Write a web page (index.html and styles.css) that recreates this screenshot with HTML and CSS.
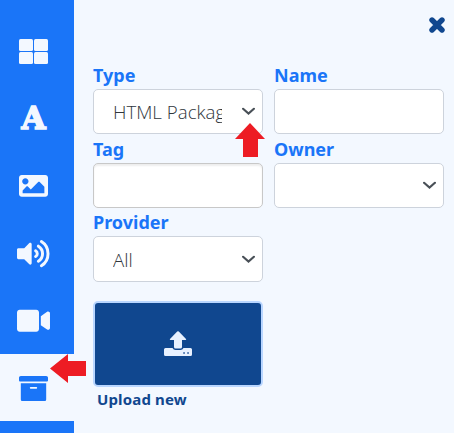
FILE: index.html
```html
<!DOCTYPE html>
<html lang="en">
<head>
<meta charset="utf-8">
<title>Media library</title>
<link rel="stylesheet" href="styles.css">
</head>
<body>
<div class="app">
  <nav class="sidebar">
    <a class="item"><svg class="icon" viewBox="0 0 29 25"><rect width="14" height="12" rx="1.5"/><rect x="15" width="14" height="12" rx="1.5"/><rect y="13" width="14" height="12" rx="1.5"/><rect x="15" y="13" width="14" height="12" rx="1.5"/></svg></a>
    <a class="item letter"><span>A</span></a>
    <a class="item"><svg class="icon" viewBox="0 64 512 384"><path d="M464 448H48c-26.500 0-48-21.500-48-48V112c0-26.500 21.500-48 48-48h416c26.500 0 48 21.500 48 48v288c0 26.500-21.500 48-48 48zM112 120c-31 0-56 25-56 56s25 56 56 56 56-25 56-56-25-56-56-56zM64 384h384V272l-87.500-87.500c-4.700-4.700-12.300-4.700-17 0L208 320l-55.500-55.500c-4.700-4.700-12.300-4.700-17 0L64 336v48z"/></svg></a>
    <a class="item"><svg class="icon wide" viewBox="0 0 576 512"><path d="M215 71L126 160H24c-13 0-24 11-24 24v144c0 13 11 24 24 24h102l89 89c15 15 41 4.500 41-17V88c0-21.500-26-32-41-17z"/><path class="wave" d="M325 206a58 58 0 0 1 0 100M373 125a154 154 0 0 1 0 262M426 45a250 250 0 0 1 0 422"/></svg></a>
    <a class="item"><svg class="icon wide" viewBox="0 0 576 512"><path d="M336 64H48C21 64 0 85 0 112v288c0 27 21 48 48 48h288c27 0 48-21 48-48V112c0-27-21-48-48-48zm189.600 37.700L416 177.300v157.400l109.600 75.500c21.200 14.600 50.400-.3 50.400-25.800V127.500c0-25.400-29.100-40.400-50.400-25.800z"/></svg></a>
    <a class="item active"><svg class="icon" viewBox="0 32 512 448"><path d="M32 448c0 17.700 14.300 32 32 32h384c17.700 0 32-14.300 32-32V160H32v288zm160-212c0-6.600 5.400-12 12-12h104c6.600 0 12 5.400 12 12v8c0 6.600-5.400 12-12 12H204c-6.600 0-12-5.400-12-12v-8zM480 32H32C14.300 32 0 46.300 0 64v48c0 8.800 7.200 16 16 16h480c8.800 0 16-7.200 16-16V64c0-17.700-14.300-32-32-32z"/></svg></a>
  </nav>
  <main class="panel">
    <header class="top"><svg class="close" viewBox="0 0 16 16"><path d="M3 3l10 10M13 3L3 13"/></svg></header>
    <form class="filters">
      <div class="field"><label>Type</label><div class="box"><span class="value">HTML Package</span><svg class="chevron" viewBox="0 0 12 8"><path d="M1 1.500l5 4.500 5-4.500"/></svg></div></div>
      <div class="field"><label>Name</label><div class="box"></div></div>
      <div class="field"><label>Tag</label><div class="box inset"></div></div>
      <div class="field"><label>Owner</label><div class="box"><span class="value"></span><svg class="chevron" viewBox="0 0 12 8"><path d="M1 1.500l5 4.500 5-4.500"/></svg></div></div>
      <div class="field"><label>Provider</label><div class="box tall"><span class="value">All</span><svg class="chevron" viewBox="0 0 12 8"><path d="M1 1.500l5 4.500 5-4.500"/></svg></div></div>
    </form>
    <div class="upload"><svg class="upload-icon" viewBox="0 0 28 26"><path d="M13.200.5Q14 0 14.800.5L22 8q.7 1-.5 1H18v7q0 1.500-1.500 1.500h-5Q10 17.500 10 16V9H6.500Q5.300 9 6 8z"/><path fill-rule="evenodd" d="M1.500 17H8.500Q9.500 19 11.500 19h5Q18.500 19 19.500 17h7Q28 17 28 18.500v5Q28 25 26.500 25h-25Q0 25 0 23.500v-5Q0 17 1.500 17zM19.300 21.300v1.500h1.500v-1.500zM23.300 21.300v1.500h1.500v-1.500z"/></svg></div>
    <div class="caption"><span>Upload new</span></div>
  </main>
  <svg class="arrow left" viewBox="0 0 36 29"><path d="M0 14.500L18 0v7h18v15H18v7z"/></svg>
  <svg class="arrow up" viewBox="0 0 30 34"><path d="M15 0l15 16h-7v18H8V16H0z"/></svg>
</div>
</body>
</html>
```
FILE: styles.css
```css
* { box-sizing: border-box; }
body { margin: 0; background: #f3f8ff; font-family: "Noto Sans", sans-serif; }
.app { position: relative; display: flex; width: 454px; height: 433px; overflow: hidden; }
.sidebar { width: 74px; padding-top: 17px; background: #1a75f8; color: #f3f8ff; flex: none; }
.item { display: flex; align-items: center; justify-content: center; height: 67.4px; padding-top: 1.6px; padding-right: 7px; }
.item.active { background: #f3f8ff; color: #1a75f8; }
.icon { width: 29px; fill: currentColor; }
.icon.wide { width: 33px; height: 29.300px; }
.wave { fill: none; stroke: currentColor; stroke-width: 52; stroke-linecap: round; }
.letter { font: bold 31px/33px "DejaVu Serif", serif; -webkit-text-stroke: 1.6px currentColor; }
.panel { flex: 1; padding: 0 10px 0 19px; }
.top { display: flex; justify-content: flex-end; height: 62px; padding: 17px 0 0; margin-right: -1px; }
.close { width: 16px; height: 16px; }
.close path { fill: none; stroke: #10478f; stroke-width: 5.400; stroke-linecap: round; }
.filters { display: grid; grid-template-columns: 170px 170px; column-gap: 11px; }
.field { height: 73.600px; }
label { display: block; height: 27px; line-height: 27px; color: #1a75f8; font-size: 18px; font-weight: 700; white-space: nowrap; }
.box { display: flex; align-items: center; height: 45px; padding: 0 7px 0 19px; border: 1px solid #cdd3dc; border-radius: 5px; background: #fff; }
.box.tall { height: 46px; }
.inset { box-shadow: inset 0 2px 2px #eee; border-color: #c8c8c8; }
.value { width: 109px; overflow: hidden; white-space: nowrap; color: #30363c; font-family: "Open Sans", "Noto Sans", sans-serif; font-size: 18.700px; font-weight: 340; line-height: 26px; padding-top: 1px; }
.chevron { width: 13px; height: 9px; margin-left: auto; fill: none; stroke: #495057; stroke-width: 2; stroke-linecap: round; }
.upload { display: flex; align-items: center; justify-content: center; width: 170px; height: 86px; margin-top: 18.200px; border: 2px solid #b9d6ff; border-radius: 5px; background: #10478f; }
.upload-icon { width: 28px; height: 26px; fill: #e8f1ff; }
.caption { padding-left: 4px; color: #10478f; font-size: 15px; font-weight: 700; line-height: 25px; letter-spacing: .15px; }
.arrow { position: absolute; fill: #ed1c24; }
.left { left: 50px; top: 354px; width: 36px; height: 29px; }
.up { left: 235px; top: 123px; width: 30px; height: 34px; }
```
